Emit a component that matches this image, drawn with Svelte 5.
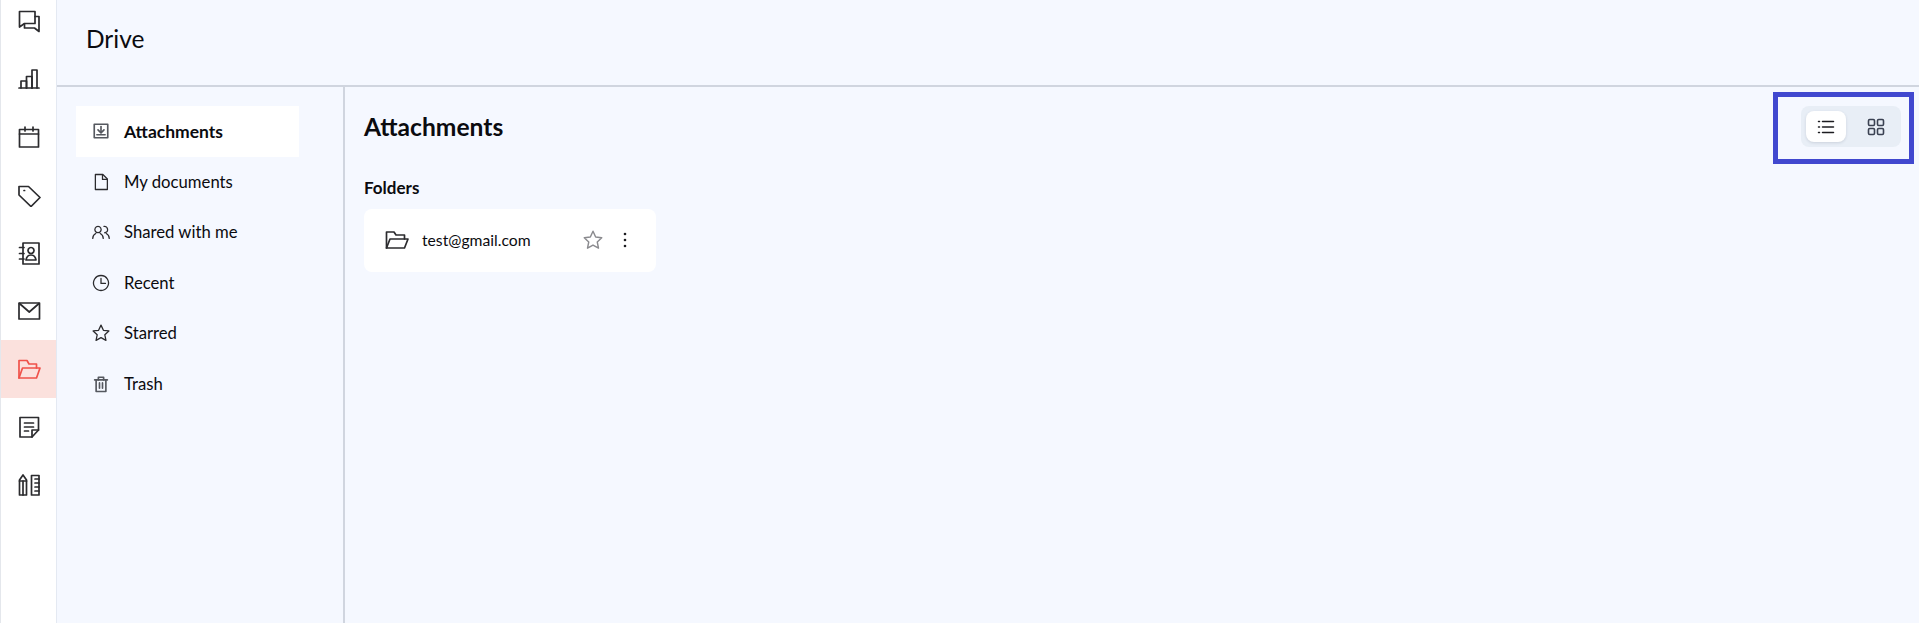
<script>
  const railItems = [
    { id: 'chat', paths: ['M2.500 2.500h15.500v12H7.500l-5 3.500z', 'M18 7.500h4v15l-4.500-3.500H7.500v-4'] },
    { id: 'stats', paths: ['M2 21h20', 'M4 21v-7h5.500v7', 'M9.500 21V9.500h5.500V21', 'M15 21V3h5v18'] },
    { id: 'calendar', paths: ['M2.500 4.500h19v17.500h-19z', 'M2.500 9h19', 'M8 2v4', 'M16 2v4'] },
    { id: 'tag', paths: ['M2 3.500h9.500L23 14.500l-9 9L2 12z', 'M7 7.500h.6'] },
    { id: 'contacts', paths: ['M6 2h16v21H6z', 'M2.500 6.500h4.500', 'M2.500 12.500h4.500', 'M2.500 18h4.500', 'M14 6.500a3 3 0 1 0 .01 0z', 'M9 19c.5-3 2.500-5 5-5s4.500 2 5 5z'] },
    { id: 'mail', paths: ['M2 4h20.500v16H2z', 'M2.500 4.500l9.750 8.500 9.750-8.500'] },
    { id: 'drive', active: true, paths: ['M2 21V3.500h8l2 3.500h7.500v4', 'M2 21l3.500-10H23l-3.500 10z'] },
    { id: 'notes', paths: ['M3 2.500h18.500v12.500l-6.500 7H3z', 'M15 22v-7h6.500', 'M7.500 8h9', 'M7.500 12h9', 'M7.500 16h4'] },
    { id: 'tools', paths: ['M2.500 22V7l3.500-5 3.500 5v15z', 'M2.500 8h7', 'M6 8v14', 'M14.500 2.500H22V22h-7.500z', 'M18 6h4', 'M18 10h4', 'M18 14h4', 'M18 18h4'] }
  ];

  const navItems = [
    { label: 'Attachments', active: true, heavy: true, paths: ['M3 3h18v18H3z', 'M12 6v8', 'M8 10.500l4 4 4-4', 'M6.500 17h11'] },
    { label: 'My documents', paths: ['M4.500 2h10L20.500 8v14h-16z', 'M14 2.500V8.500h6'] },
    { label: 'Shared with me', paths: ['M8 4.500a4.200 4.200 0 1 0 .01 0z', 'M1 20.500c0-3.500 1-5 4-6.500', 'M11 14c3 1.500 4 3 4 6.500', 'M16 4.500a4.200 4.200 0 0 1 1 8.500', 'M19 14c3 1.500 4 3 4 6.500'] },
    { label: 'Recent', paths: ['M12 2a10 10 0 1 0 .01 0z', 'M12 6v6.500h6'] },
    { label: 'Starred', paths: ['M12 1.500l3.200 6.900 7.300.9-5.400 5.100 1.500 7.400-6.600-3.700-6.600 3.700 1.500-7.400-5.400-5.100 7.300-.9z'] },
    { label: 'Trash', heavy: true, paths: ['M3.500 6.500h17', 'M8.500 6.500V3h7v3.500', 'M5.500 6.500V22h13V6.500', 'M10 10.500v7', 'M14 10.500v7'] }
  ];

  const openFolder = ['M1.500 20V4h7.500l2 3h8.500v4', 'M1.500 20l3.500-9h18l-3.500 9z'];
  const star = 'M12 1.500l3.200 6.900 7.300.9-5.400 5.100 1.500 7.400-6.600-3.700-6.600 3.700 1.500-7.400-5.400-5.100 7.300-.9z';
</script>

<div class="app">
  <nav class="rail">
    {#each railItems as item}
      <button class="rail-item" class:active={item.active} aria-label={item.id}>
        <svg viewBox="0 0 24 24" width="24" height="24">
          {#each item.paths as d}<path {d} />{/each}
        </svg>
      </button>
    {/each}
  </nav>

  <div class="page">
    <header>
      <h1>Drive</h1>
    </header>

    <div class="body">
      <aside>
        {#each navItems as item}
          <button class="nav-item" class:active={item.active}>
            <svg class:heavy={item.heavy} viewBox="0 0 24 24" width="18" height="18">
              {#each item.paths as d}<path {d} />{/each}
            </svg>
            <span>{item.label}</span>
          </button>
        {/each}
      </aside>

      <main>
        <div class="title-row">
          <h2>Attachments</h2>
          <div class="toggle">
            <button class="toggle-btn selected" aria-label="List view">
              <svg viewBox="0 0 18 18" width="18" height="18">
                <path d="M1.500 3.500h1M1.500 9h1M1.500 14.500h1" />
                <path d="M5.500 3.500h11M5.500 9h11M5.500 14.500h11" />
              </svg>
            </button>
            <button class="toggle-btn" aria-label="Grid view">
              <svg class="grid-icon" viewBox="0 0 18 18" width="18" height="18">
                <rect x="1.500" y="1.500" width="6" height="6" rx="1.200" />
                <rect x="10.500" y="1.500" width="6" height="6" rx="1.200" />
                <rect x="1.500" y="10.500" width="6" height="6" rx="1.200" />
                <rect x="10.500" y="10.500" width="6" height="6" rx="1.200" />
              </svg>
            </button>
          </div>
        </div>

        <h3>Folders</h3>

        <div class="folder-card">
          <svg class="folder-icon" viewBox="0 0 24 24" width="24" height="24">
            {#each openFolder as d}<path {d} />{/each}
          </svg>
          <span class="folder-name">test@gmail.com</span>
          <svg class="star" viewBox="0 0 24 24" width="20" height="20"><path d={star} /></svg>
          <svg class="more" viewBox="0 0 4 18" width="4" height="18">
            <circle cx="2" cy="3" r="1.300" />
            <circle cx="2" cy="9" r="1.300" />
            <circle cx="2" cy="15" r="1.300" />
          </svg>
        </div>
      </main>
    </div>
  </div>

  <div class="highlight"></div>
</div>

<style>
  :global(body) {
    margin: 0;
    background: #f5f8ff;
  }

  .app {
    position: relative;
    display: flex;
    height: 623px;
    overflow: hidden;
    font-family: Lato, sans-serif;
    color: #0b0b0f;
  }

  svg path {
    fill: none;
    stroke: currentColor;
    stroke-width: 1.700;
    stroke-linejoin: round;
    stroke-linecap: round;
  }

  svg rect {
    fill: none;
    stroke: currentColor;
    stroke-width: 1.600;
  }

  button {
    font: inherit;
    color: inherit;
    border: none;
    background: none;
    padding: 0;
  }

  .rail {
    flex: none;
    box-sizing: border-box;
    width: 57px;
    background: #fff;
    border-left: 1px solid #e4e7ec;
    border-right: 1px solid #e4e9f2;
    display: flex;
    flex-direction: column;
  }

  .rail-item {
    flex: none;
    height: 58px;
    display: flex;
    align-items: center;
    justify-content: center;
    color: #2b2b2e;
  }

  .rail-item:first-child {
    margin-top: -8px;
  }

  .rail-item.active {
    background: #fbe1dd;
    color: #f0524a;
  }

  .page {
    flex: 1;
    min-width: 0;
    display: flex;
    flex-direction: column;
  }

  header {
    flex: none;
    height: 85px;
    display: flex;
    align-items: center;
    padding-left: 29px;
    border-bottom: 2px solid #d0d5df;
  }

  h1 {
    margin: 0 0 8px;
    font-size: 24.500px;
    font-weight: 400;
  }

  .body {
    flex: 1;
    display: flex;
    min-height: 0;
  }

  aside {
    flex: none;
    box-sizing: border-box;
    width: 288px;
    padding: 19px 0 0 19px;
    border-right: 2px solid #d0d5df;
  }

  .nav-item {
    box-sizing: border-box;
    width: 223px;
    height: 50.500px;
    display: flex;
    align-items: center;
    gap: 14px;
    padding-left: 16px;
    font-size: 16.700px;
    text-align: left;
  }

  .nav-item svg {
    color: #2b2b2e;
  }

  .nav-item svg.heavy {
    color: #55585f;
  }

  .nav-item svg.heavy path {
    stroke-width: 2.200;
  }

  .nav-item.active {
    background: #fff;
    font-weight: 700;
    font-size: 17.500px;
  }

  main {
    flex: 1;
    min-width: 0;
    padding: 19px 18px 0 19px;
  }

  .title-row {
    display: flex;
    align-items: center;
    justify-content: space-between;
    height: 41px;
  }

  h2 {
    margin: 0;
    font-size: 24.600px;
    font-weight: 700;
  }

  .toggle {
    box-sizing: border-box;
    width: 100px;
    height: 41px;
    padding: 5px;
    display: flex;
    gap: 10px;
    background: #e8eef6;
    border-radius: 8px;
  }

  .toggle-btn {
    width: 40px;
    height: 31px;
    border-radius: 8px;
    display: flex;
    align-items: center;
    justify-content: center;
    color: #3a4152;
  }

  .toggle-btn.selected {
    background: #fff;
    color: #1c1c20;
    box-shadow: 0 1px 3px rgba(30, 40, 70, 0.14);
  }

  .toggle-btn svg path {
    stroke-width: 1.500;
  }

  h3 {
    margin: 31px 0 0;
    font-size: 17px;
    line-height: 20px;
    font-weight: 700;
  }

  .folder-card {
    box-sizing: border-box;
    width: 292px;
    height: 63px;
    margin-top: 11px;
    padding: 0 29px 2px 21px;
    display: flex;
    align-items: center;
    background: #fff;
    border-radius: 8px;
  }

  .folder-icon {
    flex: none;
    color: #2b2b2e;
  }

  .folder-name {
    flex: 1;
    margin-left: 13px;
    font-size: 15.700px;
  }

  .star {
    color: #8a8a8e;
    margin-right: 20px;
  }

  .more circle {
    fill: #1c1c20;
  }

  .highlight {
    position: absolute;
    left: 1773px;
    top: 92px;
    width: 141px;
    height: 72px;
    box-sizing: border-box;
    border: 5px solid #4148cf;
    pointer-events: none;
  }
</style>
